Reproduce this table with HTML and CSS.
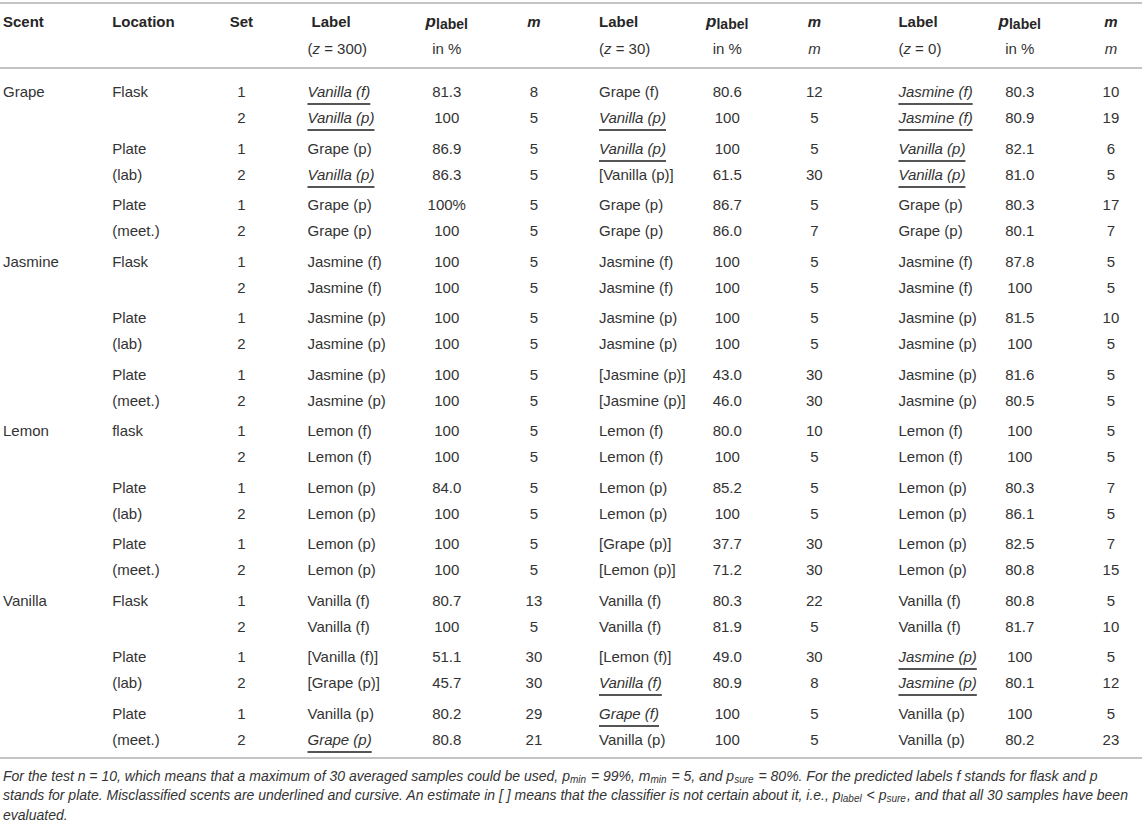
FILE: index.html
```html
<!DOCTYPE html>
<html lang="en">
<head>
<meta charset="utf-8">
<title>Classification results</title>
<link rel="stylesheet" href="styles.css">
</head>
<body>
<div class="wrap">
<table class="tbl">
  <colgroup>
    <col class="c-scent"><col class="c-loc"><col class="c-set">
    <col class="c-lab1"><col class="c-p"><col class="c-m">
    <col class="c-lab2"><col class="c-p"><col class="c-m">
    <col class="c-lab3"><col class="c-p"><col class="c-mlast">
  </colgroup>
  <thead>
    <tr class="h1">
      <th class="l">Scent</th><th class="l">Location</th><th class="c">Set</th>
      <th class="lab1 hl">Label</th><th class="c"><span class="pl">p<sub>label</sub></span></th><th class="c"><i>m</i></th>
      <th class="lab2">Label</th><th class="c"><span class="pl">p<sub>label</sub></span></th><th class="c"><i>m</i></th>
      <th class="lab3">Label</th><th class="c"><span class="pl">p<sub>label</sub></span></th><th class="c mlast"><i>m</i></th>
    </tr>
    <tr class="h2">
      <th></th><th></th><th></th>
      <th class="lab1 sub">(<i>z</i> = 300)</th><th class="c sub">in %</th><th class="sub"></th>
      <th class="lab2 sub">(<i>z</i> = 30)</th><th class="c sub">in %</th><th class="c sub"><i>m</i></th>
      <th class="lab3 sub">(<i>z</i> = 0)</th><th class="c sub">in %</th><th class="c sub mlast"><i>m</i></th>
    </tr>
  </thead>
  <tbody id="body">
    <tr class="a"><td>Grape</td><td>Flask</td><td class="c">1</td><td class="lab1"><span class="mis">Vanilla (f)</span></td><td class="c">81.3</td><td class="c">8</td><td class="lab2">Grape (f)</td><td class="c">80.6</td><td class="c">12</td><td class="lab3"><span class="mis">Jasmine (f)</span></td><td class="c">80.3</td><td class="c mlast">10</td></tr>
    <tr class="b"><td></td><td></td><td class="c">2</td><td class="lab1"><span class="mis">Vanilla (p)</span></td><td class="c">100</td><td class="c">5</td><td class="lab2"><span class="mis">Vanilla (p)</span></td><td class="c">100</td><td class="c">5</td><td class="lab3"><span class="mis">Jasmine (f)</span></td><td class="c">80.9</td><td class="c mlast">19</td></tr>
    <tr class="a"><td></td><td>Plate</td><td class="c">1</td><td class="lab1">Grape (p)</td><td class="c">86.9</td><td class="c">5</td><td class="lab2"><span class="mis">Vanilla (p)</span></td><td class="c">100</td><td class="c">5</td><td class="lab3"><span class="mis">Vanilla (p)</span></td><td class="c">82.1</td><td class="c mlast">6</td></tr>
    <tr class="b"><td></td><td>(lab)</td><td class="c">2</td><td class="lab1"><span class="mis">Vanilla (p)</span></td><td class="c">86.3</td><td class="c">5</td><td class="lab2">[Vanilla (p)]</td><td class="c">61.5</td><td class="c">30</td><td class="lab3"><span class="mis">Vanilla (p)</span></td><td class="c">81.0</td><td class="c mlast">5</td></tr>
    <tr class="a"><td></td><td>Plate</td><td class="c">1</td><td class="lab1">Grape (p)</td><td class="c">100%</td><td class="c">5</td><td class="lab2">Grape (p)</td><td class="c">86.7</td><td class="c">5</td><td class="lab3">Grape (p)</td><td class="c">80.3</td><td class="c mlast">17</td></tr>
    <tr class="b"><td></td><td>(meet.)</td><td class="c">2</td><td class="lab1">Grape (p)</td><td class="c">100</td><td class="c">5</td><td class="lab2">Grape (p)</td><td class="c">86.0</td><td class="c">7</td><td class="lab3">Grape (p)</td><td class="c">80.1</td><td class="c mlast">7</td></tr>

    <tr class="a"><td>Jasmine</td><td>Flask</td><td class="c">1</td><td class="lab1">Jasmine (f)</td><td class="c">100</td><td class="c">5</td><td class="lab2">Jasmine (f)</td><td class="c">100</td><td class="c">5</td><td class="lab3">Jasmine (f)</td><td class="c">87.8</td><td class="c mlast">5</td></tr>
    <tr class="b"><td></td><td></td><td class="c">2</td><td class="lab1">Jasmine (f)</td><td class="c">100</td><td class="c">5</td><td class="lab2">Jasmine (f)</td><td class="c">100</td><td class="c">5</td><td class="lab3">Jasmine (f)</td><td class="c">100</td><td class="c mlast">5</td></tr>
    <tr class="a"><td></td><td>Plate</td><td class="c">1</td><td class="lab1">Jasmine (p)</td><td class="c">100</td><td class="c">5</td><td class="lab2">Jasmine (p)</td><td class="c">100</td><td class="c">5</td><td class="lab3">Jasmine (p)</td><td class="c">81.5</td><td class="c mlast">10</td></tr>
    <tr class="b"><td></td><td>(lab)</td><td class="c">2</td><td class="lab1">Jasmine (p)</td><td class="c">100</td><td class="c">5</td><td class="lab2">Jasmine (p)</td><td class="c">100</td><td class="c">5</td><td class="lab3">Jasmine (p)</td><td class="c">100</td><td class="c mlast">5</td></tr>
    <tr class="a"><td></td><td>Plate</td><td class="c">1</td><td class="lab1">Jasmine (p)</td><td class="c">100</td><td class="c">5</td><td class="lab2">[Jasmine (p)]</td><td class="c">43.0</td><td class="c">30</td><td class="lab3">Jasmine (p)</td><td class="c">81.6</td><td class="c mlast">5</td></tr>
    <tr class="b"><td></td><td>(meet.)</td><td class="c">2</td><td class="lab1">Jasmine (p)</td><td class="c">100</td><td class="c">5</td><td class="lab2">[Jasmine (p)]</td><td class="c">46.0</td><td class="c">30</td><td class="lab3">Jasmine (p)</td><td class="c">80.5</td><td class="c mlast">5</td></tr>

    <tr class="a"><td>Lemon</td><td>flask</td><td class="c">1</td><td class="lab1">Lemon (f)</td><td class="c">100</td><td class="c">5</td><td class="lab2">Lemon (f)</td><td class="c">80.0</td><td class="c">10</td><td class="lab3">Lemon (f)</td><td class="c">100</td><td class="c mlast">5</td></tr>
    <tr class="b"><td></td><td></td><td class="c">2</td><td class="lab1">Lemon (f)</td><td class="c">100</td><td class="c">5</td><td class="lab2">Lemon (f)</td><td class="c">100</td><td class="c">5</td><td class="lab3">Lemon (f)</td><td class="c">100</td><td class="c mlast">5</td></tr>
    <tr class="a"><td></td><td>Plate</td><td class="c">1</td><td class="lab1">Lemon (p)</td><td class="c">84.0</td><td class="c">5</td><td class="lab2">Lemon (p)</td><td class="c">85.2</td><td class="c">5</td><td class="lab3">Lemon (p)</td><td class="c">80.3</td><td class="c mlast">7</td></tr>
    <tr class="b"><td></td><td>(lab)</td><td class="c">2</td><td class="lab1">Lemon (p)</td><td class="c">100</td><td class="c">5</td><td class="lab2">Lemon (p)</td><td class="c">100</td><td class="c">5</td><td class="lab3">Lemon (p)</td><td class="c">86.1</td><td class="c mlast">5</td></tr>
    <tr class="a"><td></td><td>Plate</td><td class="c">1</td><td class="lab1">Lemon (p)</td><td class="c">100</td><td class="c">5</td><td class="lab2">[Grape (p)]</td><td class="c">37.7</td><td class="c">30</td><td class="lab3">Lemon (p)</td><td class="c">82.5</td><td class="c mlast">7</td></tr>
    <tr class="b"><td></td><td>(meet.)</td><td class="c">2</td><td class="lab1">Lemon (p)</td><td class="c">100</td><td class="c">5</td><td class="lab2">[Lemon (p)]</td><td class="c">71.2</td><td class="c">30</td><td class="lab3">Lemon (p)</td><td class="c">80.8</td><td class="c mlast">15</td></tr>

    <tr class="a"><td>Vanilla</td><td>Flask</td><td class="c">1</td><td class="lab1">Vanilla (f)</td><td class="c">80.7</td><td class="c">13</td><td class="lab2">Vanilla (f)</td><td class="c">80.3</td><td class="c">22</td><td class="lab3">Vanilla (f)</td><td class="c">80.8</td><td class="c mlast">5</td></tr>
    <tr class="b"><td></td><td></td><td class="c">2</td><td class="lab1">Vanilla (f)</td><td class="c">100</td><td class="c">5</td><td class="lab2">Vanilla (f)</td><td class="c">81.9</td><td class="c">5</td><td class="lab3">Vanilla (f)</td><td class="c">81.7</td><td class="c mlast">10</td></tr>
    <tr class="a"><td></td><td>Plate</td><td class="c">1</td><td class="lab1">[Vanilla (f)]</td><td class="c">51.1</td><td class="c">30</td><td class="lab2">[Lemon (f)]</td><td class="c">49.0</td><td class="c">30</td><td class="lab3"><span class="mis">Jasmine (p)</span></td><td class="c">100</td><td class="c mlast">5</td></tr>
    <tr class="b"><td></td><td>(lab)</td><td class="c">2</td><td class="lab1">[Grape (p)]</td><td class="c">45.7</td><td class="c">30</td><td class="lab2"><span class="mis">Vanilla (f)</span></td><td class="c">80.9</td><td class="c">8</td><td class="lab3"><span class="mis">Jasmine (p)</span></td><td class="c">80.1</td><td class="c mlast">12</td></tr>
    <tr class="a"><td></td><td>Plate</td><td class="c">1</td><td class="lab1">Vanilla (p)</td><td class="c">80.2</td><td class="c">29</td><td class="lab2"><span class="mis">Grape (f)</span></td><td class="c">100</td><td class="c">5</td><td class="lab3">Vanilla (p)</td><td class="c">100</td><td class="c mlast">5</td></tr>
    <tr class="b last"><td></td><td>(meet.)</td><td class="c">2</td><td class="lab1"><span class="mis">Grape (p)</span></td><td class="c">80.8</td><td class="c">21</td><td class="lab2">Vanilla (p)</td><td class="c">100</td><td class="c">5</td><td class="lab3">Vanilla (p)</td><td class="c">80.2</td><td class="c mlast">23</td></tr>
  </tbody>
</table>
<p class="note">For the test n = 10, which means that a maximum of 30 averaged samples could be used, p<sub>min</sub> = 99%, m<sub>min</sub> = 5, and p<sub>sure</sub> = 80%. For the predicted labels f stands for flask and p stands for plate. Misclassified scents are underlined and cursive. An estimate in [ ] means that the classifier is not certain about it, i.e., p<sub>label</sub> &lt; p<sub>sure</sub>, and that all 30 samples have been evaluated.</p>
</div>
</body>
</html>
```

FILE: styles.css
```css
html, body {
  margin: 0;
  padding: 0;
  background: #ffffff;
}

body {
  font-family: "Liberation Sans", Arial, Helvetica, sans-serif;
  color: #2e2e2e;
}

.wrap {
  width: 1142px;
}

.tbl {
  width: 1142px;
  border-collapse: collapse;
  table-layout: fixed;
  font-size: 15px;
  margin-top: 2px;
}

.c-scent { width: 109px; }
.c-loc { width: 91px; }
.c-set { width: 82px; }
.c-lab1 { width: 118px; }
.c-p { width: 92px; }
.c-m { width: 82px; }
.c-lab2 { width: 106px; }
.c-lab3 { width: 118px; }
.c-mlast { width: 76px; }

.tbl th,
.tbl td {
  padding: 0 0 0 3px;
  line-height: 18px;
  text-align: left;
  vertical-align: top;
  white-space: nowrap;
}

.tbl .c {
  text-align: center;
  padding-left: 0;
}

.tbl .mlast {
  padding-left: 14px;
}

.tbl .lab1 { padding-left: 25px; }
.tbl .lab2 { padding-left: 24px; }
.tbl .lab3 { padding-left: 43px; }
.tbl th.hl { padding-left: 29px; }

.tbl th {
  font-weight: bold;
  color: #262626;
}

.tbl .h1 th {
  border-top: 2px solid #c4c4c4;
  padding-top: 9px;
  padding-bottom: 9px;
  line-height: 18px;
}

.tbl .h2 th {
  padding-bottom: 9px;
  font-weight: normal;
  color: #333;
  border-bottom: 2px solid #c4c4c4;
}

.pl {
  font-style: italic;
  font-size: 17px;
}

.pl sub {
  font-style: normal;
  font-size: 14px;
  vertical-align: -2px;
  line-height: 0;
}

.tbl tbody td {
  padding-top: 4px;
  padding-bottom: 4px;
  color: #333;
}

.tbl tbody tr:first-child td {
  padding-top: 14px;
}

.tbl tbody tr.b td {
  padding-bottom: 8.5px;
}

.tbl tbody tr.last td {
  padding-bottom: 8px;
  border-bottom: 2px solid #c4c4c4;
}

.mis {
  font-style: italic;
  text-decoration: underline;
  text-decoration-thickness: 1.5px;
  text-underline-offset: 6px;
  text-decoration-color: #555;
}

.note {
  margin: 0;
  padding: 8px 10px 0 3px;
  font-size: 14px;
  line-height: 19.5px;
  font-style: italic;
  color: #333;
}

.note sub {
  font-size: 10px;
  line-height: 0;
  vertical-align: -2px;
  margin-right: 1px;
}
```
